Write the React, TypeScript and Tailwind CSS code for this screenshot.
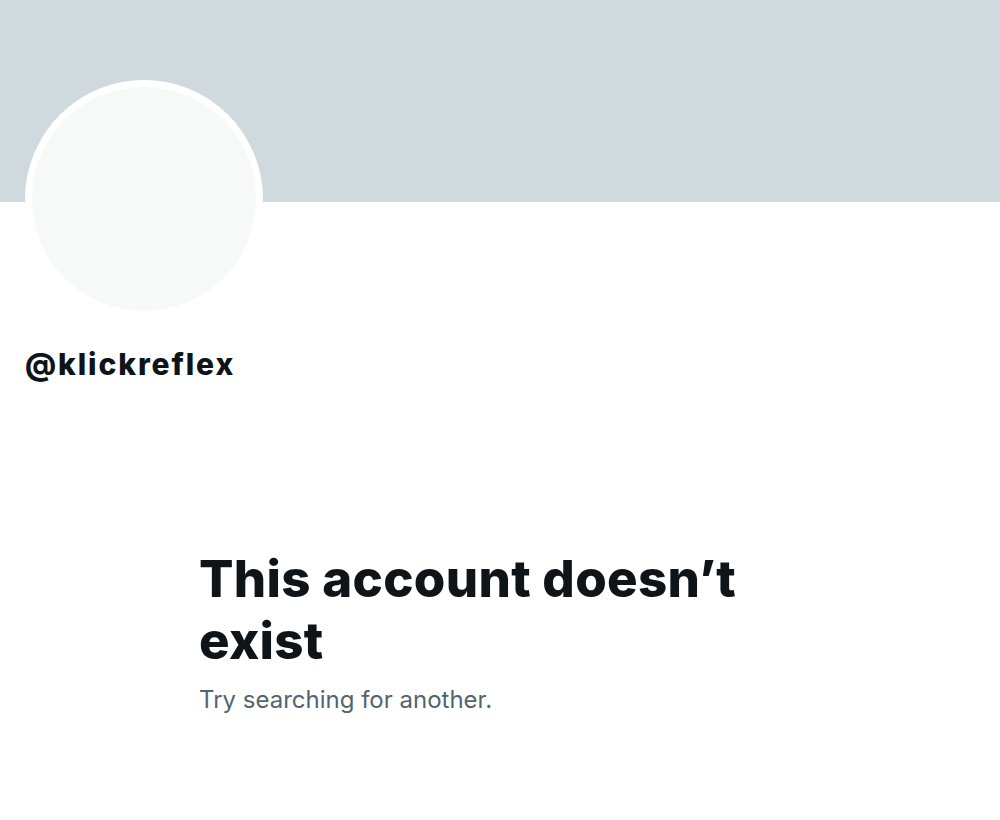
import React from "react";

export default function App() {
  return (
    <div
      className="w-[1000px] h-[820px] bg-white overflow-hidden"
      style={{ fontFamily: "Inter, 'Noto Sans', sans-serif" }}
    >
      <div className="h-[202px] bg-[#cfd9de]" />
      <div className="px-[25px]">
        <div className="-mt-[122px] w-[238px] h-[238px] rounded-full bg-white p-[7px]">
          <div className="w-full h-full rounded-full bg-[#f7f9f9]" />
        </div>
        <div className="mt-[26px] text-[30px] font-extrabold text-[#0f1419] leading-[40px] tracking-[1.9px]">
          @klickreflex
        </div>
      </div>
      <div className="pl-[199px] mt-[164px]">
        <div className="text-[51px] font-extrabold text-[#0f1419] leading-[62px] w-[580px] tracking-[0.3px]">
          This account doesn’t exist
        </div>
        <div className="mt-[12px] text-[24px] text-[#536471] leading-[32px]">
          Try searching for another.
        </div>
      </div>
    </div>
  );
}
